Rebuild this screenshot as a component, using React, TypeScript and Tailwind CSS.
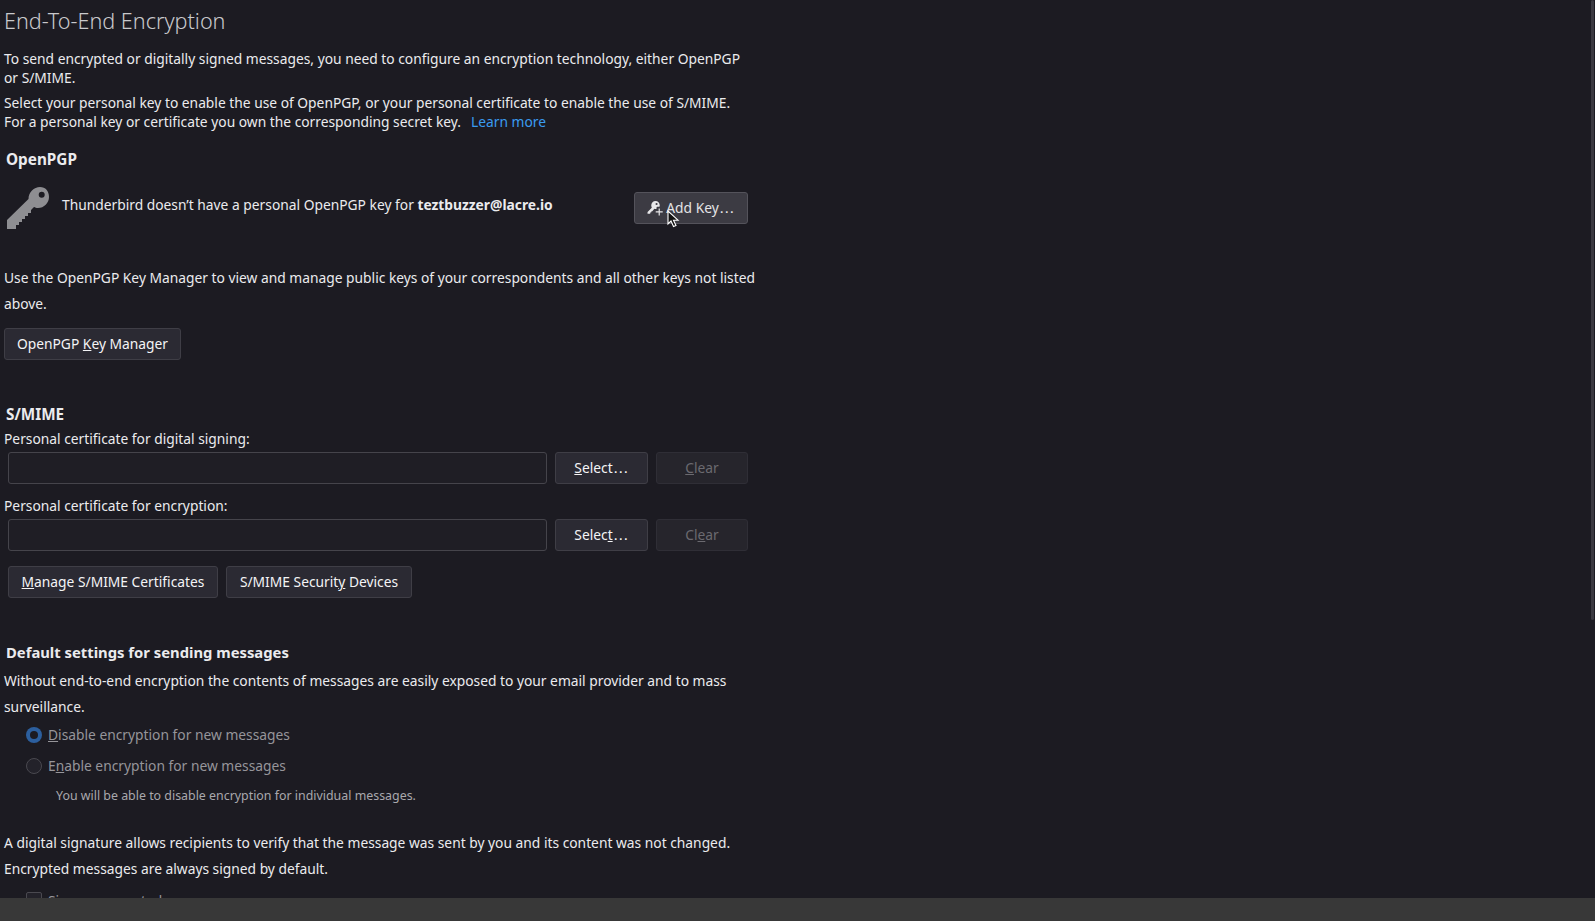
const font = "[font-family:'Noto_Sans',sans-serif]";

const btn =
  "flex h-8 items-center justify-center rounded-[3px] border border-[#3f3e46] bg-[#2b2a33] text-[13.8px] text-[#f4f4f6]";
const btnOff =
  "flex h-8 items-center justify-center rounded-[3px] border border-[#2f2e36] bg-[#26252c] text-[13.8px] text-[#6b6a70]";
const field = "h-8 w-[539px] rounded-[3px] border border-[#45444b] bg-[#1f1e25]";

function Dots() {
  return <span className="text-[16px] leading-none [font-family:'Liberation_Sans',sans-serif]">…</span>;
}

function KeyIcon() {
  return (
    <svg viewBox="0 0 42 42" className="h-[42px] w-[42px] shrink-0" aria-hidden="true">
      <path
        fillRule="evenodd"
        fill="#8e8e92"
        d="M33 0C38.500 0 42 4 42 10C42 16 37 21 31 21C29.500 21 28 20.500 27 20L24 23V26H21V29H18V32H15V35H12V38H9V42H0V33L21.500 12C21.500 5 27 0 33 0ZM34.700 4.700a3 3 0 1 0 0 6 3 3 0 0 0 0-6Z"
      />
    </svg>
  );
}

function SmallKeyPlus() {
  return (
    <svg viewBox="0 0 16 16" className="h-[17px] w-[17px] shrink-0" aria-hidden="true">
      <path
        fillRule="evenodd"
        fill="#e8e8ea"
        d="M8 1a4 4 0 0 1 4 4c0 .6-.1 1-.3 1.400H9.500c-.3 0-.5.2-.5.5v1.300c-.4.2-.7.3-1 .3-.4 0-.8-.1-1.100-.2L5 10.500l-.8.1-.1 1-1 .2-.1 1.200H.5v-1.800l4-4C4.200 6.600 4 5.800 4 5a4 4 0 0 1 4-4zm1 1.800a1 1 0 1 0 0 2 1 1 0 0 0 0-2z"
      />
      <path d="M11.500 8v6.500M8.200 11.250h6.600" stroke="#e8e8ea" strokeWidth="1.100" />
    </svg>
  );
}

function Pointer() {
  return (
    <svg viewBox="0 0 13 18" className="absolute left-[32px] top-[17px] h-[18px] w-[13px]" aria-hidden="true">
      <path d="M1 1v13l3-3 2.500 5.500 2.500-1-2.500-5.300H11z" fill="#111" stroke="#fff" strokeWidth="1.100" />
    </svg>
  );
}

function Radio({ on }: { on?: boolean }) {
  return on ? (
    <span className="flex h-4 w-4 items-center justify-center rounded-full bg-[#2c5f9e]">
      <span className="h-2 w-2 rounded-full bg-[#1c1b22]" />
    </span>
  ) : (
    <span className="h-4 w-4 rounded-full border border-[#4a4950] bg-[#23222a]" />
  );
}

export default function App() {
  return (
    <div className={`flex h-[921px] flex-col overflow-hidden bg-[#1c1b22] text-[13.8px] text-[#ebebee] ${font}`}>
      <main className="relative min-h-0 flex-1 overflow-hidden pl-1">
        <div className="absolute right-px top-0 h-[620px] w-[3px] rounded-full bg-[#3a3940]" />

        <div className="w-[752px]">
          <h1 className="h-[41px] text-[21.6px] font-light leading-[41px] text-[#c9c9cc]">End-To-End Encryption</h1>

          <p className="mt-[8px] leading-[19px]">
            To send encrypted or digitally signed messages, you need to configure an encryption technology, either
            OpenPGP or S/MIME.
          </p>
          <p className="mt-[6px] leading-[19px]">
            Select your personal key to enable the use of OpenPGP, or your personal certificate to enable the use of
            S/MIME.
            <br />
            For a personal key or certificate you own the corresponding secret key.
            <span className="ml-[10px] text-[#3a9bf0]">Learn more</span>
          </p>

          <h2 className="mt-[17px] pl-[2px] text-[15.3px] font-bold leading-[22px]">OpenPGP</h2>

          <div className="mt-[17px] flex h-[42px] w-[744px] items-start pl-[3px]">
            <KeyIcon />
            <p className="ml-[13px] mt-[8px] flex-1 leading-[20px]">
              Thunderbird doesn’t have a personal OpenPGP key for <strong className="font-bold">teztbuzzer@lacre.io</strong>
            </p>
            <button
              type="button"
              className="relative mt-[5px] flex h-8 w-[114px] shrink-0 items-center justify-center gap-[2px] rounded-[3px] border border-[#54535b] bg-[#3c3b43] text-[#e4e4e6]"
            >
              <SmallKeyPlus />
              <span>
                Add Key
                <Dots />
              </span>
              <Pointer />
            </button>
          </div>

          <p className="mt-[36px] leading-[26px]">
            Use the OpenPGP Key Manager to view and manage public keys of your correspondents and all other keys not
            listed above.
          </p>

          <button type="button" className={`${btn} mt-[11px] w-[177px]`}>
            <span>
              OpenPGP <u>K</u>ey Manager
            </span>
          </button>

          <h2 className="mt-[43px] pl-[2px] text-[15.3px] font-bold leading-[22px]">S/MIME</h2>

          <label className="mt-[3px] block leading-[22px]">Personal certificate for digital signing:</label>
          <div className="mt-[2px] flex gap-2 pl-1">
            <div className={field} />
            <button type="button" className={`${btn} w-[93px]`}>
              <span>
                <u>S</u>elect
                <Dots />
              </span>
            </button>
            <button type="button" className={`${btnOff} w-[92px]`}>
              <span>
                <u>C</u>lear
              </span>
            </button>
          </div>

          <label className="mt-[11px] block leading-[22px]">Personal certificate for encryption:</label>
          <div className="mt-[2px] flex gap-2 pl-1">
            <div className={field} />
            <button type="button" className={`${btn} w-[93px]`}>
              <span>
                Selec<u>t</u>
                <Dots />
              </span>
            </button>
            <button type="button" className={`${btnOff} w-[92px]`}>
              <span>
                Cl<u>e</u>ar
              </span>
            </button>
          </div>

          <div className="mt-[15px] flex gap-2 pl-1">
            <button type="button" className={`${btn} w-[210px]`}>
              <span>
                <u>M</u>anage S/MIME Certificates
              </span>
            </button>
            <button type="button" className={`${btn} w-[186px]`}>
              <span>
                S/MIME Securit<u>y</u> Devices
              </span>
            </button>
          </div>

          <h2 className="mt-[43px] pl-[2px] text-[14.8px] font-bold leading-[22px]">Default settings for sending messages</h2>

          <p className="mt-[5px] leading-[26px]">
            Without end-to-end encryption the contents of messages are easily exposed to your email provider and to mass
            surveillance.
          </p>

          <div className="flex h-[30px] items-center gap-[6px] pl-[22px] text-[#96959a]">
            <Radio on />
            <span>
              <u>D</u>isable encryption for new messages
            </span>
          </div>
          <div className="mt-px flex h-[30px] items-center gap-[6px] pl-[22px] text-[#96959a]">
            <Radio />
            <span>
              E<u>n</u>able encryption for new messages
            </span>
          </div>
          <p className="mt-[5px] pl-[52px] text-[12.4px] leading-[20px] text-[#a9a8ad]">
            You will be able to disable encryption for individual messages.
          </p>

          <p className="mt-[24px] leading-[26px]">
            A digital signature allows recipients to verify that the message was sent by you and its content was not
            changed.
            <br />
            Encrypted messages are always signed by default.
          </p>

          <div className="mt-[10px] flex h-[16px] items-start gap-[6px] pl-[22px] text-[#96959a]">
            <span className="h-4 w-4 shrink-0 rounded-[2px] border border-[#4a4950] bg-[#23222a]" />
            <span className="leading-[18px]">Sign unencrypted messages</span>
          </div>
        </div>
      </main>
      <footer className="h-[23px] shrink-0 bg-[#383838]" />
    </div>
  );
}
